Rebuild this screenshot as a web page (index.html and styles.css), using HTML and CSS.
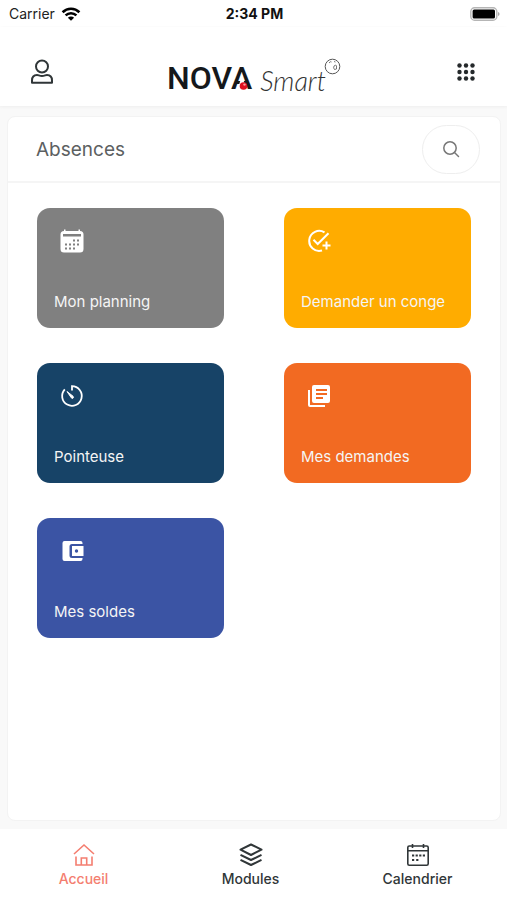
FILE: index.html
```html
<!DOCTYPE html>
<html lang="fr">
<head>
<meta charset="utf-8">
<meta name="viewport" content="width=device-width, initial-scale=1">
<title>Nova Smart – Absences</title>
<link rel="stylesheet" href="styles.css">
</head>
<body>
<div class="status">
  <div class="carrier"><span>Carrier</span>
    <svg width="20" height="14" viewBox="0 0 20 14" fill="none" stroke="#000" stroke-width="2.6"><path d="M1.6 5.2a12 12 0 0 1 16.8 0M4.6 8.4a7.8 7.8 0 0 1 10.800 0"/><path d="M10 13.800 6.900 10.700a4.400 4.400 0 0 1 6.200 0z" fill="#000" stroke="none"/></svg>
  </div>
  <span class="time">2:34 PM</span>
  <svg class="battery" width="30" height="14" viewBox="0 0 30 14"><rect x=".8" y=".8" width="26" height="12.400" rx="3.800" fill="#fff" stroke="#b5b5b5" stroke-width="1.400"/><rect x="2.600" y="2.400" width="22.400" height="9.200" rx="1.500" fill="#000"/><path d="M28 5v4q1.600-.6 1.600-2T28 5z" fill="#aaa"/></svg>
</div>
<header class="topbar">
  <button class="icon-btn" aria-label="Profil">
    <svg width="24" height="26" viewBox="0 0 24 26" fill="none" stroke="#303638" stroke-width="2"><circle cx="12" cy="7.500" r="6"/><path d="M2 23.800v-2.300c0-3.300 2-5.500 5-5.500 1.500 0 2.500 1 5 1s3.500-1 5-1c3 0 5 2.200 5 5.500v2.300z" stroke-linejoin="round"/></svg>
  </button>
  <div class="logo">
    <span class="nova">NOVA<svg class="ball" width="12" height="18" viewBox="0 0 12 18"><path d="M6 1.500 1.500 17.500h9z" fill="#fff"/><circle cx="7.500" cy="13" r="3.800" fill="#df1020"/><circle cx="8.500" cy="11.600" r="1.200" fill="#fa9a9a"/></svg></span>
    <span class="smart">Smart</span>
    <svg class="globe" width="17" height="17" viewBox="0 0 17 17" fill="none" stroke="#555" stroke-width="1"><circle cx="8.500" cy="8.500" r="7.300"/><path d="M5 5q1.500-2 2.500-1M10 3.500l1.500.5M10 8q2-2 2.500 0v3l-2 .5q-1.500-1.500-.5-3.500" stroke-width=".8"/></svg>
  </div>
  <button class="icon-btn" aria-label="Applications">
    <svg width="20" height="20" viewBox="0 0 20 20" fill="#25292b"><circle cx="3.500" cy="3.500" r="2.200"/><circle cx="10" cy="3.500" r="2.200"/><circle cx="16.500" cy="3.500" r="2.200"/><circle cx="3.500" cy="10" r="2.200"/><circle cx="10" cy="10" r="2.200"/><circle cx="16.500" cy="10" r="2.200"/><circle cx="3.500" cy="16.500" r="2.200"/><circle cx="10" cy="16.500" r="2.200"/><circle cx="16.500" cy="16.500" r="2.200"/></svg>
  </button>
</header>
<main class="card">
  <div class="card-head">
    <h1>Absences</h1>
    <button class="search" aria-label="Rechercher">
      <svg width="18" height="18" viewBox="0 0 18 18" fill="none" stroke="#777" stroke-width="1.500" stroke-linecap="round"><circle cx="8" cy="8" r="6.200"/><path d="m12.500 12.500 4 4"/></svg>
    </button>
  </div>
  <div class="tiles">
    <a href="#planning" class="tile gray">
      <svg width="24" height="24" viewBox="0 0 24 24"><path fill="#fff" d="M4 2V.5h1.500V2h13V.5H20V2q3.500 0 3.500 3.500v14.500q0 3.500-3.500 3.500H4Q.5 23.500.5 20V5.500Q.5 2 4 2z"/><path fill="#808080" d="M3 5h18v2.500H3zM13 10.500h2v2h-2zm4 0h2v2h-2zM5 14.500h2v2H5zm4 0h2v2H9zm4 0h2v2h-2zm4 0h2v2h-2zM5 18.500h2v2H5zm4 0h2v2H9zm4 0h2v2h-2z"/></svg>
      <span>Mon planning</span>
    </a>
    <a href="#conge" class="tile yellow">
      <svg width="24" height="24" viewBox="0 0 24 24" fill="none" stroke="#fff" stroke-width="2"><path d="M17.500 3.400A10 10 0 1 0 15 21.500M6.500 10.800l4.200 4.200L21.500 4.200M19.500 12.500v8M15.500 16.500h8"/></svg>
      <span>Demander un conge</span>
    </a>
    <a href="#pointeuse" class="tile navy">
      <svg width="24" height="24" viewBox="0 0 24 24" fill="none" stroke="#fff" stroke-width="1.800"><path d="M12 6.500V2.200a9.800 9.800 0 1 1-7.200 3.100"/><path d="m7 7.500 6 4.700q1 1.300 0 2-.8.600-1.700-.4z" fill="#fff" stroke-width="1"/></svg>
      <span>Pointeuse</span>
    </a>
    <a href="#demandes" class="tile orange">
      <svg width="24" height="24" viewBox="0 0 24 24" fill="#fff"><path d="M3 6H1v15q0 2 2 2h15v-2H3zM21 1H7Q5 1 5 3v14q0 2 2 2h14q2 0 2-2V3q0-2-2-2zm-1 10H9V9h11zm-4 4H9v-2h7zm4-8H9V5h11z"/></svg>
      <span>Mes demandes</span>
    </a>
    <a href="#soldes" class="tile blue">
      <svg width="24" height="24" viewBox="0 0 24 24" fill="#fff"><path d="M22.500 19v1q0 2-2 2h-16q-2 0-2-2V4q0-2 2-2h16q2 0 2 2v1H12q-2.500 0-2.500 2.500v9Q9.500 19 12 19zM12 7v10h11.500V7zm4.500 6.700a1.700 1.700 0 1 1 0-3.400 1.700 1.700 0 0 1 0 3.400z"/></svg>
      <span>Mes soldes</span>
    </a>
  </div>
</main>
<nav class="tabs">
  <a href="#accueil" class="tab active">
    <svg width="24" height="24" viewBox="0 0 24 24" fill="none" stroke="#f47e70" stroke-width="1.600"><path d="M2 11 12 2l10 9M4 13.500V22h16v-8.500M9.300 22v-7h5.400v7"/></svg>
    <span>Accueil</span>
  </a>
  <a href="#modules" class="tab">
    <svg width="24" height="24" viewBox="0 0 24 24" fill="none" stroke="#303638" stroke-width="2" stroke-linejoin="round"><path d="m12 1.500 10.500 5.200L12 12 1.500 6.700zM1.500 11.800 12 17l10.500-5.200M1.500 16.800 12 22l10.500-5.200"/></svg>
    <span>Modules</span>
  </a>
  <a href="#calendrier" class="tab">
    <svg width="24" height="24" viewBox="0 0 24 24" fill="none" stroke="#303638" stroke-width="1.600"><rect x="1.800" y="3" width="20.400" height="19.200" rx="1.500"/><path d="M2 7.700h20M6.500 1v4M17.500 1v4"/><path d="M6 12.500h2.200m1.400 0h2.200m1.400 0h2.200m1.400 0H19M6 17h2.200m2 0h2.200" stroke-width="2"/></svg>
    <span>Calendrier</span>
  </a>
</nav>
</body>
</html>
```
FILE: styles.css
```css
* { box-sizing: border-box; }
body {
  margin: 0;
  min-height: 100vh;
  display: flex;
  flex-direction: column;
  background: #f9f9f9;
  color: #303638;
  font-family: Inter, "Liberation Sans", sans-serif;
}
a { color: inherit; text-decoration: none; }
button { padding: 0; border: 0; background: none; }
svg { display: block; flex: none; }

.status {
  display: grid;
  grid-template-columns: 1fr auto 1fr;
  align-items: center;
  height: 27px;
  padding: 0 7px 0 9px;
  background: #fff;
  color: #222;
  font-size: 14px;
}
.carrier { display: flex; align-items: center; gap: 6px; }
.time { font-weight: 700; color: #111; }
.battery { justify-self: end; }

.topbar {
  display: flex;
  align-items: center;
  justify-content: space-between;
  height: 79px;
  padding: 0 29px 0 30px;
  background: #fff;
  box-shadow: 0 1px 3px #eee;
}
.icon-btn {
  display: flex;
  align-items: center;
  justify-content: center;
  width: 24px;
  height: 32px;
  margin-bottom: -10px;
}
.logo { display: flex; align-items: center; height: 48px; margin-bottom: -22px; }
.nova {
  position: relative;
  font-family: Roboto, sans-serif;
  font-size: 32px;
  font-weight: 500;
  line-height: 32px;
  color: #15181b;
}
.ball { position: absolute; right: 4px; bottom: 3px; }
.smart {
  margin: 6px 0 0 8px;
  font-family: Lato, sans-serif;
  font-size: 27px;
  font-style: italic;
  font-weight: 300;
  line-height: 32px;
  color: #333;
}
.globe { margin: 0 0 22px -2px; }

.card {
  flex: 1;
  margin: 10px 6px 8px 7px;
  background: #fff;
  border: 1px solid #f3f3f3;
  border-radius: 8px;
}
.card-head {
  display: flex;
  align-items: center;
  justify-content: space-between;
  height: 66px;
  padding: 0 20px 0 28px;
  border-bottom: 2px solid #f5f5f5;
}
h1 { margin: 0; font-size: 19px; font-weight: 400; color: #5c6061; }
.search {
  display: flex;
  align-items: center;
  justify-content: center;
  width: 58px;
  height: 49px;
  border: 1px solid #eee;
  border-radius: 25px;
}
.tiles {
  display: grid;
  grid-template-columns: 1fr 1fr;
  gap: 35px 60px;
  padding: 25px 29px;
}
.tile {
  display: flex;
  flex-direction: column;
  justify-content: space-between;
  height: 120px;
  padding: 21px 17px 16px;
  border-radius: 13px;
  color: #f5f5f5;
  font-size: 15px;
  line-height: 20px;
}
.tile svg { margin-left: 6px; }
.gray { background: #808080; }
.yellow { background: #ffac00; }
.navy { background: #174367; }
.orange { background: #f26a22; }
.blue { background: #3b54a4; }

.tabs {
  display: grid;
  grid-template-columns: 1fr 1fr 1fr;
  height: 71px;
  padding: 14px 6px 0 0;
  background: #fff;
}
.tab {
  display: flex;
  flex-direction: column;
  align-items: center;
  gap: 2px;
  font-size: 14px;
  font-weight: 500;
  line-height: 20px;
}
.active { color: #f47e70; }
```
